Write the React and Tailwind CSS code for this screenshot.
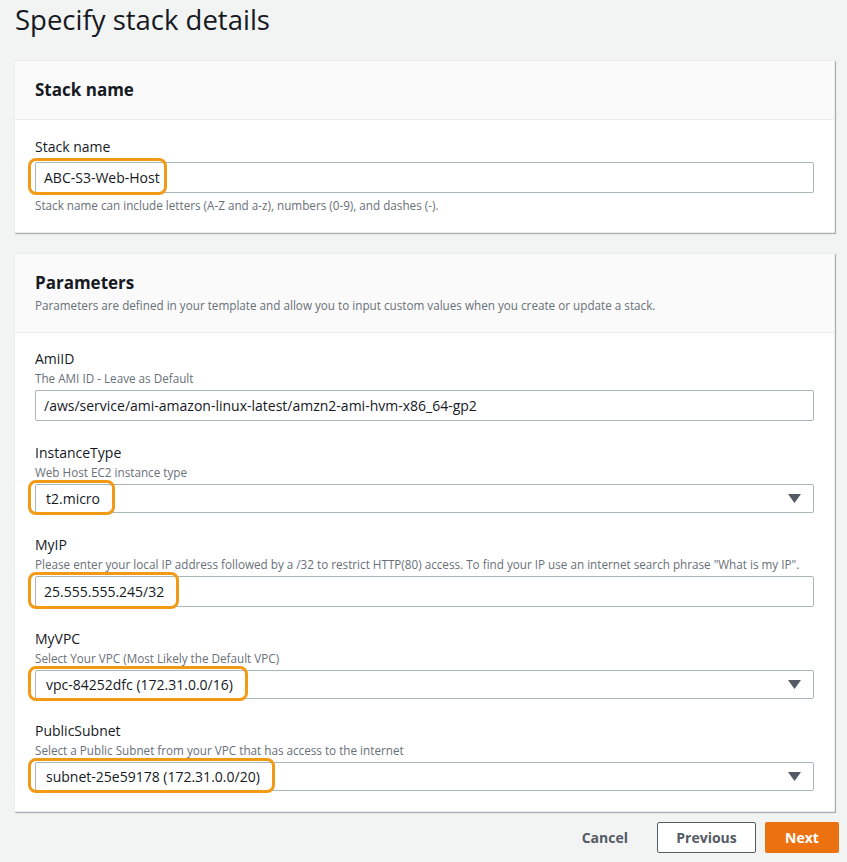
import React from 'react'

const FONT = { fontFamily: '"Open Sans", "Liberation Sans", sans-serif' }

function Highlight({ children, left = 16, right = 15 }) {
  // orange callout ring drawn over the field value
  return (
    <span className="relative h-full inline-flex items-center">
      <span
        className="absolute -top-[5px] -bottom-[3px] rounded-[8px] border-[3px] border-[#f29a16]"
        style={{ left: -left, right: -right }}
      />
      {children}
    </span>
  )
}

function Field({ label, desc, value, select, mark }) {
  return (
    <div className="mb-[23px] last:mb-0">
      <div className="text-[14px] leading-[18px] text-[#16191f]">{label}</div>
      {desc && <div className="text-[11.7px] leading-[16px] text-[#687078] mt-[2px]">{desc}</div>}
      <div className={`mt-[4px] bg-white border border-[#aab7b8] rounded-[2px] flex items-center pr-[12px] text-[14px] text-[#16191f] ${select ? 'h-[29px] pl-[10px]' : 'h-[31px] pl-[8px]'}`}>
        <div className="flex-1 h-full flex items-center">
          {mark ? <Highlight left={select ? 18 : 16}>{value}</Highlight> : value}
        </div>
        {select && (
          <svg width="13" height="9" viewBox="0 0 13 9"><path d="M0 0H13L6.5 9Z" fill="#545b64" /></svg>
        )}
      </div>
    </div>
  )
}

function Card({ title, desc, children }) {
  return (
    <div className="bg-white border border-[#eaeded] shadow-[1px_1px_1px_0_rgba(0,28,36,0.35)] rounded-[1px]">
      <div className="bg-[#fafafa] border-b border-[#eaeded] px-[20px] pt-[17px] pb-[17px]">
        <div className="text-[17px] leading-[24px] font-bold text-[#16191f]">{title}</div>
        {desc && <div className="text-[11.7px] leading-[16px] text-[#687078] mt-[2px] mb-[2px]">{desc}</div>}
      </div>
      <div className="px-[20px] pt-[17px] pb-[20px]">{children}</div>
    </div>
  )
}

export default function App() {
  return (
    <div className="min-h-[862px] w-[847px] bg-[#f2f3f3] pl-[14px] pr-[12px]" style={FONT}>
      <h1 className="text-[27.5px] leading-[32px] text-[#16191f] pt-[4px] pl-[1px] pb-[24px]">Specify stack details</h1>

      <Card title="Stack name">
        <div className="text-[14px] leading-[18px] text-[#16191f] mt-[1px]">Stack name</div>
        <div className="mt-[6px] h-[31px] bg-white border border-[#aab7b8] rounded-[2px] flex items-center pl-[8px] text-[14px] text-[#16191f]">
          <Highlight right={7}>ABC-S3-Web-Host</Highlight>
        </div>
        <div className="text-[11.7px] leading-[16px] text-[#687078] mt-[4px] mb-[-1px]">
          Stack name can include letters (A-Z and a-z), numbers (0-9), and dashes (-).
        </div>
      </Card>

      <div className="h-[20px]" />

      <Card title="Parameters" desc="Parameters are defined in your template and allow you to input custom values when you create or update a stack.">
        <Field label="AmiID" desc="The AMI ID - Leave as Default" value="/aws/service/ami-amazon-linux-latest/amzn2-ami-hvm-x86_64-gp2" />
        <Field label="InstanceType" desc="Web Host EC2 instance type" value="t2.micro" select mark />
        <Field label="MyIP" desc={'Please enter your local IP address followed by a /32 to restrict HTTP(80) access. To find your IP use an internet search phrase "What is my IP".'} value="25.555.555.245/32" mark />
        <Field label="MyVPC" desc="Select Your VPC (Most Likely the Default VPC)" value="vpc-84252dfc (172.31.0.0/16)" select mark />
        <Field label="PublicSubnet" desc="Select a Public Subnet from your VPC that has access to the internet" value="subnet-25e59178 (172.31.0.0/20)" select mark />
      </Card>

      <div className="flex justify-end items-center gap-[9px] mt-[10px]">
        <button className="px-[20px] h-[31px] text-[14px] font-bold text-[#545b64]">Cancel</button>
        <button className="w-[99px] h-[31px] border border-[#545b64] bg-white text-[14px] font-bold text-[#545b64] rounded-[2px]">Previous</button>
        <button className="w-[74px] h-[31px] bg-[#ec7211] text-white text-[14px] font-bold rounded-[2px] -mr-[4px]">Next</button>
      </div>
    </div>
  )
}
